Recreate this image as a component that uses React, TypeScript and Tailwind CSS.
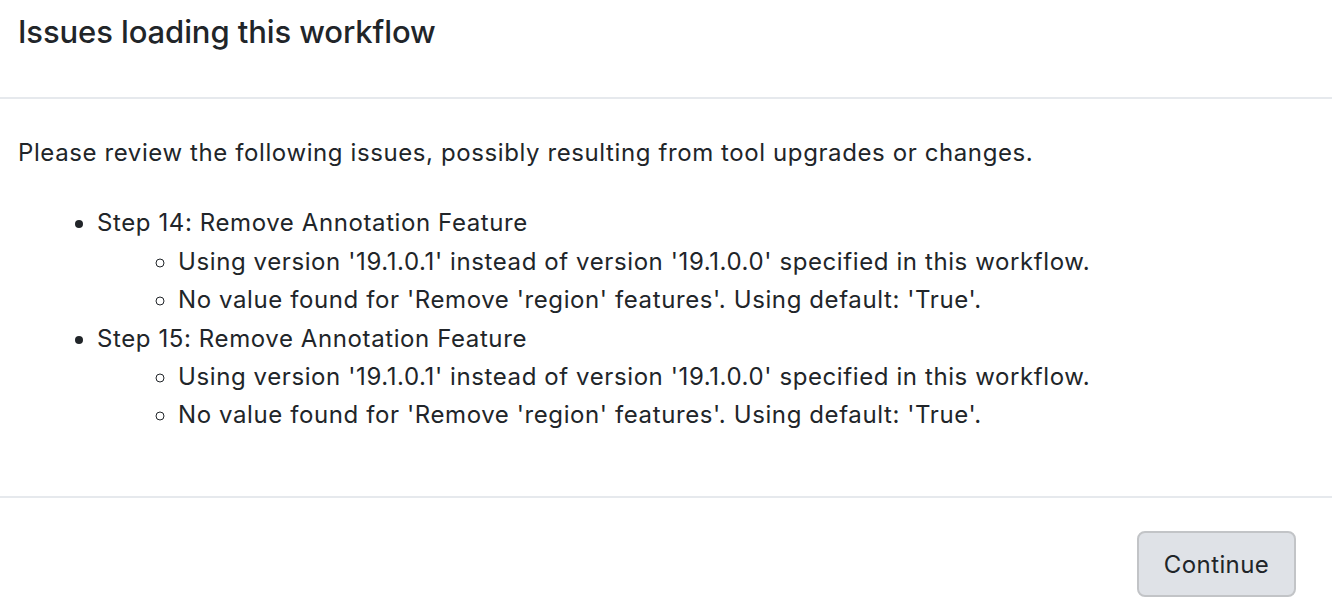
const ISSUES = [
  {
    step: 'Step 14: Remove Annotation Feature',
    messages: [
      "Using version '19.1.0.1' instead of version '19.1.0.0' specified in this workflow.",
      "No value found for 'Remove 'region' features'. Using default: 'True'.",
    ],
  },
  {
    step: 'Step 15: Remove Annotation Feature',
    messages: [
      "Using version '19.1.0.1' instead of version '19.1.0.0' specified in this workflow.",
      "No value found for 'Remove 'region' features'. Using default: 'True'.",
    ],
  },
];

export default function App() {
  return (
    <div
      className="w-[1332px] h-[610px] bg-white text-[#212529] overflow-hidden"
      style={{ fontFamily: 'Inter, "Noto Sans", sans-serif' }}
    >
      <div className="h-[99px] border-b-[2px] border-[#e6e9ed] px-[18px] pt-[12px]">
        <h5 className="text-[31px] font-medium leading-[40px] tracking-[-0.1px]">
          Issues loading this workflow
        </h5>
      </div>

      <div className="h-[399px] border-b-[2px] border-[#e6e9ed] px-[18px] pt-[35px] text-[24px] leading-[38.4px] tracking-[0.6px]">
        <p>Please review the following issues, possibly resulting from tool upgrades or changes.</p>
        <ul className="mt-[32px] list-disc pl-[79px]">
          {ISSUES.map((issue) => (
            <li key={issue.step}>
              {issue.step}
              <ul className="list-[circle] pl-[81px]">
                {issue.messages.map((msg) => (
                  <li key={msg}>{msg}</li>
                ))}
              </ul>
            </li>
          ))}
        </ul>
      </div>

      <div className="flex justify-end px-[36px] pt-[33px]">
        <button className="h-[66px] w-[159px] rounded-[8px] border-[2px] border-[#c2c4c7] bg-[#dfe2e7] pt-[2px] text-[24px] tracking-[0.4px] text-[#212529]">
          Continue
        </button>
      </div>
    </div>
  );
}
